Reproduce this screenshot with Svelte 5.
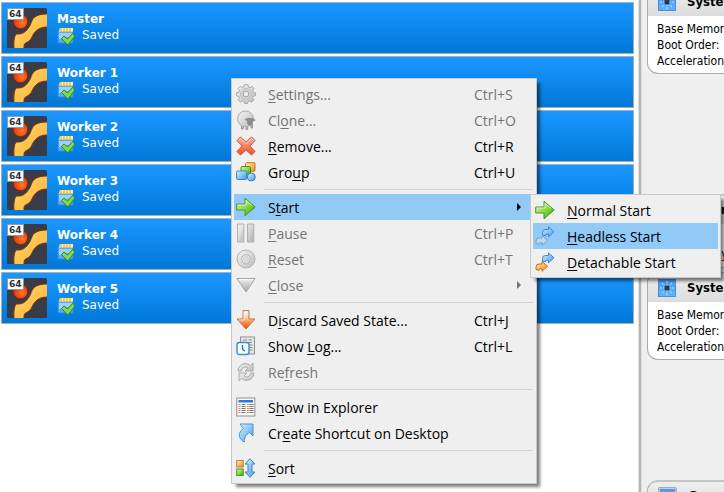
<script>
  const machines = ['Master', 'Worker 1', 'Worker 2', 'Worker 3', 'Worker 4', 'Worker 5'];

  // t holds the label as [before, mnemonic, after]
  const groups = [
    [
      { icon: 'gear', t: ['', 'S', 'ettings...'], key: 'Ctrl+S', off: true },
      { icon: 'clone', t: ['Cl', 'o', 'ne...'], key: 'Ctrl+O', off: true },
      { icon: 'remove', t: ['', 'R', 'emove...'], key: 'Ctrl+R' },
      { icon: 'group', t: ['Gro', 'u', 'p'], key: 'Ctrl+U' }
    ],
    [
      { icon: 'start', t: ['S', 't', 'art'], sub: true, active: true },
      { icon: 'pause', t: ['', 'P', 'ause'], key: 'Ctrl+P', off: true },
      { icon: 'reset', t: ['', 'R', 'eset'], key: 'Ctrl+T', off: true },
      { icon: 'close', t: ['', 'C', 'lose'], sub: true, off: true }
    ],
    [
      { icon: 'discard', t: ['D', 'i', 'scard Saved State...'], key: 'Ctrl+J' },
      { icon: 'log', t: ['Show ', 'L', 'og...'], key: 'Ctrl+L' },
      { icon: 'refresh', t: ['Re', 'f', 'resh'], off: true }
    ],
    [
      { icon: 'explorer', t: ['S', 'h', 'ow in Explorer'] },
      { icon: 'shortcut', t: ['Cr', 'e', 'ate Shortcut on Desktop'] }
    ],
    [{ icon: 'sort', t: ['', 'S', 'ort'] }]
  ];

  const startModes = [
    { icon: 'start', t: ['', 'N', 'ormal Start'] },
    { icon: 'headless', t: ['', 'H', 'eadless Start'], active: true },
    { icon: 'detach', t: ['', 'D', 'etachable Start'] }
  ];
</script>

{#snippet icon(name)}
  <svg class="icon" width="20" height="20" viewBox="0 0 20 20" aria-hidden="true">
    {#if name === 'gear'}
      <path d="M8 .8h4l.5 2.300 1.600.6L16 2.400 18 4.600l-1.300 2 .5 1.600 2.200.5v3l-2.300.6-.6 1.500 1.300 2.100-2.200 2.300-2-1.300-1.600.6-.5 2H8.600l-.6-2-1.600-.6-2 1.300-2.300-2.300 1.300-2-.6-1.500-2.200-.5V8.700l2.300-.5.6-1.600-1.300-2 2.100-2.200 2 1.300 1.300-.6z" fill="url(#silver)" stroke="#aaa" />
      <circle cx="10" cy="10" r="5.500" fill="#d2d2d2" stroke="#c0c0c0" />
      <circle cx="10" cy="10" r="2.800" fill="#efefef" stroke="#a5a5a5" />
    {:else if name === 'clone'}
      <path d="M5.500 14v5h1.800v-4M10 15v4.500h1.800V15M15 14v4h1.500v-5" fill="#bbb" stroke="#999" />
      <circle cx="9.500" cy="8.800" r="7.900" fill="url(#silver)" stroke="#aaa" />
      <path d="M9 9.500l3-1.200 5 .4 2.300 1.500-2.800.6-1 3.600-2.500 1-1.300-1.600-.2-3z" fill="#8c8c8c" stroke="#7c7c7c" stroke-width=".6" />
    {:else if name === 'remove'}
      <path d="M4.500 1L10 6.200 15.500 1 19 4.500 13.800 10 19 15.500 15.500 19 10 13.800 4.500 19 1 15.500 6.200 10 1 4.500z" fill="url(#red)" stroke="#c64a32" />
      <path d="M2.500 4.500l2-2L10 7.700l5.500-5.200 2 2" fill="none" stroke="#fff" stroke-opacity=".6" />
    {:else if name === 'group'}
      <rect x="9.500" y=".7" width="9.500" height="8.500" rx="1" fill="url(#orange)" stroke="#c5721c" />
      <rect x="5" y="4.500" width="9.500" height="8.500" rx="1" fill="url(#green)" stroke="#3f9613" />
      <rect x=".6" y="9" width="10" height="8.500" rx="1" fill="url(#blue)" stroke="#3c86cb" />
      <circle cx="15.300" cy="15" r="4" fill="url(#blue)" stroke="#3c7fc4" />
    {:else if name === 'start'}
      <path d="M.7 7H9V1.200L19.200 10 9 18.800V13H.7z" fill="url(#green)" stroke="#4b9430" />
      <path d="M1.800 8h8.300V3.500l6 5" fill="none" stroke="#fff" stroke-opacity=".6" />
    {:else if name === 'pause'}
      <path d="M1.500 1h6.300v18H1.500zM11.500 1h6.300v18h-6.300z" fill="url(#silver)" stroke="#b0b0b0" />
      <path d="M7 5v13H3zM17 5v13h-4z" fill="#aaa" opacity=".3" />
    {:else if name === 'reset'}
      <circle cx="10" cy="10" r="9" fill="url(#silver)" stroke="#b2b2b2" />
      <circle cx="10" cy="10" r="4.300" fill="#efefef" stroke="#b5b5b5" />
      <circle cx="10" cy="10" r="2.500" fill="#ddd" stroke="#d0d0d0" />
    {:else if name === 'close'}
      <path d="M.9 3.500h18.200L10 17z" fill="url(#steel)" stroke="#a4a4a4" />
      <path d="M3 4.700h14" stroke="#fff" />
    {:else if name === 'discard'}
      <path d="M7 .6h6V9h6L10 19 1 9h6z" fill="url(#flame)" stroke="#be7448" />
      <path d="M8 1.600v8.400H3" fill="none" stroke="#fff" stroke-opacity=".6" />
    {:else if name === 'log'}
      <rect x="4.500" y="1" width="14" height="17" fill="#e6e6e6" stroke="#8b8f93" />
      <path d="M7 4h4M12.500 4H16M7 6.500h9M13 9h3.500M13 11.500h3.500M13 14h3.500" stroke="#8c8c8c" />
      <rect x="1" y="6.500" width="12" height="12" rx="2.500" fill="#f8fcff" stroke="#3d8bd2" stroke-width="1.400" />
      <path d="M6.500 9v4.200l2.400 2" fill="none" stroke="#246eb4" stroke-width="1.300" />
    {:else if name === 'refresh'}
      <path d="M2 9C2 3 9-1 14.500 3.500L17 1v8H9l3-3C8.500 4 6 5.500 5.500 9z" fill="url(#silver)" stroke="#aaa" />
      <path d="M18 11c0 6-7 10-12.500 5.500L3 19v-8h8l-3 3c3.500 2 6 .5 6.500-3z" fill="url(#silver)" stroke="#aaa" />
    {:else if name === 'explorer'}
      <rect x=".8" y="1" width="18" height="18" fill="#fcfcfc" stroke="#8d8d8d" />
      <rect x="2.500" y="3" width="14.500" height="2.500" fill="#3275dc" />
      <path d="M2.500 7.500h2M2.500 9.500h2M2.500 11.500h2M2.500 13.500h2M2.500 15.500h2M11 7.500h2M11 9.500h2M11 11.500h2M11 13.500h2M11 15.500h2" stroke="#e88a4d" />
      <path d="M5.500 7.500h4M5.500 9.500h4M5.500 11.500h4M5.500 13.500h4M5.500 15.500h4M13.500 7.500h4M13.500 9.500h4M13.500 11.500h4M13.500 13.500h4M13.500 15.500h4" stroke="#777" />
    {:else if name === 'shortcut'}
      <path d="M4 1h13v12l-3.500-3.500C9.500 12 8 15 8.500 19 2 16 1.500 9.500 7.500 5.500z" fill="url(#blue)" stroke="#4d93ce" />
    {:else if name === 'sort'}
      <rect x=".7" y="2.500" width="6.500" height="6.500" fill="url(#orange)" stroke="#b08440" />
      <rect x=".7" y="11" width="6.500" height="6.500" fill="url(#green)" stroke="#52923a" />
      <path d="M14 .7l5 5.300h-3v8h3l-5 5.300L9 14h3V6H9z" fill="url(#blue)" stroke="#3c86c3" />
    {:else if name === 'headless' || name === 'detach'}
      <path d="M7.500 9V6.500q0-3 3-3h3V.9L19 5.800l-5.500 5V8.300h-2q-1 0-1 1.500z" fill="url(#blue)" stroke="#4285c4" />
      <path d="M1 17.500V15q0-3 3-3h3V9.400l5.500 4.900-5.500 5v-2.500H5q-1 0-1 1.500z" fill={name === 'detach' ? 'url(#orange)' : '#b9d6f3'} stroke={name === 'detach' ? '#b8741c' : '#7f9fbd'} />
    {/if}
  </svg>
{/snippet}

{#snippet item(m)}
  <button class="item" class:active={m.active} role="menuitem" disabled={m.off}>
    {@render icon(m.icon)}
    <span class="label">{m.t[0]}<u>{m.t[1]}</u>{m.t[2]}</span>
    {#if m.key}<kbd>{m.key}</kbd>{/if}
    {#if m.sub}<span class="arrow"></span>{/if}
  </button>
{/snippet}

{#snippet generalCard()}
  <section class="card">
    <h2>
      <svg width="18" height="18" viewBox="0 0 18 18" aria-hidden="true"><rect x=".5" y=".5" width="17" height="17" fill="#eee" stroke="#aaa" /></svg>
      General
    </h2>
    <div class="facts general"><p>Name:</p><p>Operating System:</p></div>
  </section>
{/snippet}

{#snippet systemCard()}
  <section class="card">
    <h2>
      <svg width="18" height="18" viewBox="0 0 18 18" aria-hidden="true">
        <rect x=".5" y=".5" width="17" height="17" fill="url(#chip)" stroke="#4a8fd8" />
        <path d="M9 2v14M2 9h14M4 4l10 10M14 4L4 14" stroke="#b5dcff" stroke-width="1.200" stroke-dasharray="2 1" />
        <rect x="6.500" y="6.500" width="5" height="5" fill="#27384e" />
      </svg>
      System
    </h2>
    <div class="facts"><p>Base Memory:</p><p>Boot Order:</p><p>Acceleration:</p></div>
  </section>
{/snippet}

<svg class="defs" width="0" height="0" aria-hidden="true">
  <defs>
    <linearGradient id="silver" x2="1" y2="1"><stop stop-color="#f4f4f4" /><stop offset="1" stop-color="#bcbcbc" /></linearGradient>
    <linearGradient id="steel" x2="0" y2="1"><stop stop-color="#ececec" /><stop offset="1" stop-color="#a8a8a8" /></linearGradient>
    <linearGradient id="red" x2="0" y2="1"><stop stop-color="#ffb5a2" /><stop offset="1" stop-color="#f34a22" /></linearGradient>
    <linearGradient id="green" x2="1" y2="1"><stop stop-color="#d8fab4" /><stop offset=".5" stop-color="#8bdc45" /><stop offset="1" stop-color="#2fa000" /></linearGradient>
    <linearGradient id="orange" x2="1" y2="1"><stop stop-color="#fff0b8" /><stop offset="1" stop-color="#ef8c12" /></linearGradient>
    <linearGradient id="blue" x2="1" y2="1"><stop stop-color="#def2ff" /><stop offset="1" stop-color="#3598ee" /></linearGradient>
    <linearGradient id="chip" x2="0" y2="1"><stop stop-color="#3f9bf5" /><stop offset="1" stop-color="#61b3ff" /></linearGradient>
    <linearGradient id="flame" x2="0" y2="1"><stop stop-color="#fff" /><stop offset=".4" stop-color="#ffc79c" /><stop offset=".9" stop-color="#f5570b" /></linearGradient>
    <linearGradient id="amber" x2="1" y2="1"><stop stop-color="#ffd862" /><stop offset="1" stop-color="#ffb03c" /></linearGradient>
    <radialGradient id="ball" cx=".6" cy=".6"><stop stop-color="#ff7a2c" /><stop offset="1" stop-color="#e93d06" /></radialGradient>
  </defs>
</svg>

<main>
  <div class="machines">
    {#each machines as name}
      <button class="machine">
        <span class="os">
          <svg width="40" height="40" viewBox="0 0 40 40" aria-hidden="true">
            <rect width="40" height="40" rx="1.500" fill="#393c47" />
            <circle cx="13.500" cy="13.500" r="7.300" fill="url(#ball)" stroke="#7d2712" />
            <path d="M7 40.500C6.500 34 7 29 9 26 15 26.500 18 24.500 21 20.500 24.500 16.500 24 12.500 27 9.500 31 6.500 35 6 40.500 6v13C35 19 31.500 20.500 28.500 23.500 25 27 25.500 30 22.500 32.500 20.500 34.500 18.500 34.500 17.500 36 17 37.500 17 38.500 17 40.500z" fill="url(#amber)" stroke="#7a3515" />
          </svg>
          <b class="bits">64</b>
        </span>
        <span class="info">
          <strong>{name}</strong>
          <span class="state">
            <svg width="19" height="19" viewBox="0 0 19 19" aria-hidden="true">
              <path d="M3 1h13v15H1V4z" fill="#58aaf2" stroke="#3487d4" />
              <path d="M3 1h13v3.500H2z" fill="#fff1b0" />
              <path d="M4 1v4M7 1v4M10 1v4M13 1v4" stroke="#f0b429" stroke-width="1.300" />
              <path d="M2 6h13v3L2 12z" fill="#9fd0fa" />
              <path d="M4.500 11.500L7 9l3.500 3 5-5.500L18 9l-7.200 9z" fill="#7fd94d" stroke="#318b22" />
            </svg>
            Saved
          </span>
        </span>
      </button>
    {/each}
  </div>
  <div class="splitter"></div>
  <aside class="details">
    <div class="vm scrolled">{@render systemCard()}</div>
    <div class="vm">
      {@render generalCard()}
      {@render systemCard()}
    </div>
    <div class="vm">
      <section class="card">
        <h2>
          <svg width="19" height="18" viewBox="0 0 19 18" aria-hidden="true">
            <rect x=".8" y=".8" width="17.400" height="15" rx="1" fill="#eee" stroke="#aaa" stroke-width="1.500" />
            <rect x="2" y="2" width="15" height="12" fill="url(#chip)" />
          </svg>
          General
        </h2>
      </section>
    </div>
  </aside>
</main>

<div class="menu context" role="menu">
  {#each groups as group, i}
    {#if i > 0}<hr />{/if}
    {#each group as m}{@render item(m)}{/each}
  {/each}
</div>

<div class="menu submenu" role="menu">
  {#each startModes as m}{@render item(m)}{/each}
</div>

<style>
  :global(body) { overflow: hidden; background: #fff; }
  .defs { position: absolute; }
  main {
    display: grid;
    grid-template-columns: minmax(0, 638fr) 4px minmax(0, 82fr);
    height: 100vh;
    overflow: hidden;
    font: 12px/16px "DejaVu Sans Condensed", "DejaVu Sans", sans-serif;
  }
  .machines {
    display: flex;
    flex-direction: column;
    gap: 2px;
    padding: 2px 4px 2px 1px;
  }
  .machine {
    display: flex;
    align-items: center;
    gap: 10px;
    height: 52px;
    padding: 0 5px;
    border: 1px solid #a5adb5;
    background: linear-gradient(#1a97ff, #0078d8);
    color: #fff;
    font-family: "DejaVu Sans", sans-serif;
    font-size: 12px;
    line-height: 16px;
    text-align: left;
  }
  .os { position: relative; width: 40px; height: 40px; }
  .os svg { display: block; }
  .bits {
    position: absolute;
    top: 0;
    left: 0;
    padding: 0 1px;
    border: 1px solid #999;
    background: #fff;
    color: #333;
    font-size: 9px;
    line-height: 10px;
  }
  .info { display: flex; flex-direction: column; }
  .state { display: flex; align-items: flex-start; gap: 6px; height: 18px; }
  .splitter { background: linear-gradient(90deg, #e0e0e0 1px, #b4b4b4 1px 3px, #e0e0e0 3px); }
  .details { overflow: hidden; padding-left: 5px; background: #efefef; }
  .vm { display: flex; flex-direction: column; gap: 4px; width: 420px; margin-bottom: 120px; }
  .scrolled { margin-top: -14px; }
  .card {
    box-sizing: border-box;
    border: 1px solid #aaa;
    border-top: 2px solid #c4c4c4;
    border-radius: 11px;
    overflow: hidden;
    background: #fff;
  }
  h2 {
    display: flex;
    align-items: center;
    gap: 11px;
    height: 28px;
    margin: 0;
    padding-left: 10px;
    background: linear-gradient(#eee, #dcdcdc);
    font: bold 13px/16px "DejaVu Sans Condensed", "DejaVu Sans", sans-serif;
  }
  .facts { padding: 5px 9px 4px; white-space: nowrap; }
  .facts p { margin: 0; }
  .general { padding: 6px 9px 5px; }

  .menu {
    position: absolute;
    box-sizing: border-box;
    padding: 2px;
    border: 1px solid #c8c8c8;
    background: #efefef;
    box-shadow: 4px 4px 3px -1px rgba(0, 0, 0, 0.5);
    font: 14px/20px "Open Sans", "Noto Sans", sans-serif;
  }
  .context { left: 231px; top: 78px; width: 306px; }
  .submenu { left: 530px; top: 194px; width: 191px; }
  .item {
    display: flex;
    align-items: center;
    width: 100%;
    height: 26px;
    padding: 0 2px;
    border: 0;
    background: none;
    color: #000;
    font: inherit;
    text-align: left;
  }
  .item:disabled { color: #757575; }
  .item.active { background: #91c9f7; }
  .icon { flex: none; margin-right: 12px; }
  .label, kbd { padding-top: 2px; }
  .label { flex: 1; white-space: nowrap; }
  u { text-decoration-thickness: 1px; text-underline-offset: 2px; }
  kbd { width: 58px; font: inherit; }
  .arrow {
    margin-right: 11px;
    border: 4px solid transparent;
    border-left-color: currentColor;
    border-right: 0;
  }
  hr { height: 1px; margin: 4px 1px 4px 30px; border: 0; background: #d2d2d2; }
</style>
